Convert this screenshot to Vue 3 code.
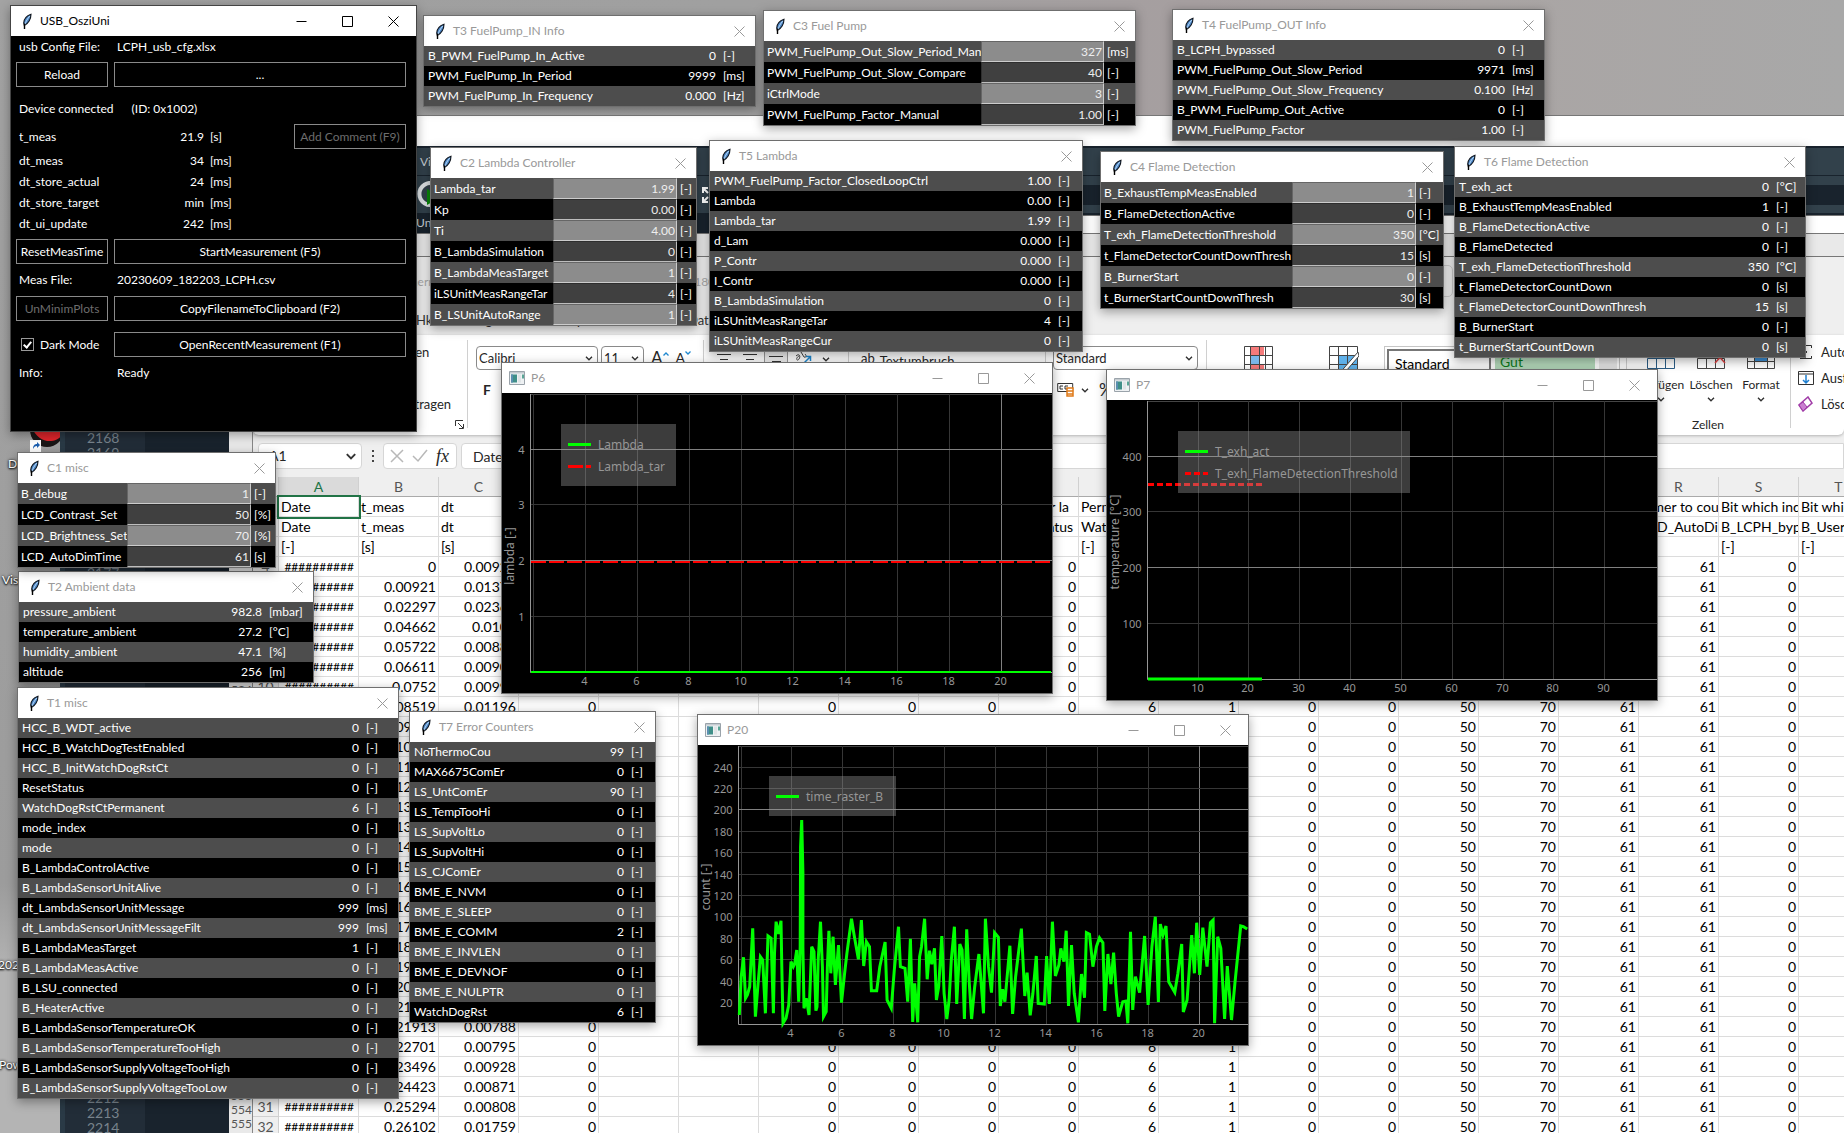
<script setup>
const tableWindows = [
  {
    id: 't3', title: 'T3 FuelPump_IN Info', x: 423, y: 15, w: 333, unit: 32,
    rows: [
      ['B_PWM_FuelPump_In_Active', '0', '[-]'],
      ['PWM_FuelPump_In_Period', '9999', '[ms]'],
      ['PWM_FuelPump_In_Frequency', '0.000', '[Hz]'],
    ],
  },
  {
    id: 't4', title: 'T4 FuelPump_OUT Info', x: 1172, y: 9, w: 373, unit: 32,
    rows: [
      ['B_LCPH_bypassed', '0', '[-]'],
      ['PWM_FuelPump_Out_Slow_Period', '9971', '[ms]'],
      ['PWM_FuelPump_Out_Slow_Frequency', '0.100', '[Hz]'],
      ['B_PWM_FuelPump_Out_Active', '0', '[-]'],
      ['PWM_FuelPump_Factor', '1.00', '[-]'],
    ],
  },
  {
    id: 't5', title: 'T5 Lambda', x: 709, y: 140, w: 374, unit: 24,
    rows: [
      ['PWM_FuelPump_Factor_ClosedLoopCtrl', '1.00', '[-]'],
      ['Lambda', '0.00', '[-]'],
      ['Lambda_tar', '1.99', '[-]'],
      ['d_Lam', '0.000', '[-]'],
      ['P_Contr', '0.000', '[-]'],
      ['I_Contr', '0.000', '[-]'],
      ['B_LambdaSimulation', '0', '[-]'],
      ['iLSUnitMeasRangeTar', '4', '[-]'],
      ['iLSUnitMeasRangeCur', '0', '[-]'],
    ],
  },
  {
    id: 't6', title: 'T6 Flame Detection', x: 1454, y: 146, w: 352, unit: 29,
    rows: [
      ['T_exh_act', '0', '[°C]'],
      ['B_ExhaustTempMeasEnabled', '1', '[-]'],
      ['B_FlameDetectionActive', '0', '[-]'],
      ['B_FlameDetected', '0', '[-]'],
      ['T_exh_FlameDetectionThreshold', '350', '[°C]'],
      ['t_FlameDetectorCountDown', '0', '[s]'],
      ['t_FlameDetectorCountDownThresh', '15', '[s]'],
      ['B_BurnerStart', '0', '[-]'],
      ['t_BurnerStartCountDown', '0', '[s]'],
    ],
  },
  {
    id: 't2', title: 'T2 Ambient data', x: 18, y: 571, w: 296, unit: 44,
    rows: [
      ['pressure_ambient', '982.8', '[mbar]'],
      ['temperature_ambient', '27.2', '[°C]'],
      ['humidity_ambient', '47.1', '[%]'],
      ['altitude', '256', '[m]'],
    ],
  },
  {
    id: 't1', title: 'T1 misc', x: 17, y: 687, w: 382, unit: 32,
    rows: [
      ['HCC_B_WDT_active', '0', '[-]'],
      ['HCC_B_WatchDogTestEnabled', '0', '[-]'],
      ['HCC_B_InitWatchDogRstCt', '0', '[-]'],
      ['ResetStatus', '0', '[-]'],
      ['WatchDogRstCtPermanent', '6', '[-]'],
      ['mode_index', '0', '[-]'],
      ['mode', '0', '[-]'],
      ['B_LambdaControlActive', '0', '[-]'],
      ['B_LambdaSensorUnitAlive', '0', '[-]'],
      ['dt_LambdaSensorUnitMessage', '999', '[ms]'],
      ['dt_LambdaSensorUnitMessageFilt', '999', '[ms]'],
      ['B_LambdaMeasTarget', '1', '[-]'],
      ['B_LambdaMeasActive', '0', '[-]'],
      ['B_LSU_connected', '0', '[-]'],
      ['B_HeaterActive', '0', '[-]'],
      ['B_LambdaSensorTemperatureOK', '0', '[-]'],
      ['B_LambdaSensorTemperatureTooHigh', '0', '[-]'],
      ['B_LambdaSensorSupplyVoltageTooHigh', '0', '[-]'],
      ['B_LambdaSensorSupplyVoltageTooLow', '0', '[-]'],
    ],
  },
  {
    id: 't7', title: 'T7 Error Counters', x: 409, y: 711, w: 247, unit: 24,
    rows: [
      ['NoThermoCou', '99', '[-]'],
      ['MAX6675ComEr', '0', '[-]'],
      ['LS_UntComEr', '90', '[-]'],
      ['LS_TempTooHi', '0', '[-]'],
      ['LS_SupVoltLo', '0', '[-]'],
      ['LS_SupVoltHi', '0', '[-]'],
      ['LS_CJComEr', '0', '[-]'],
      ['BME_E_NVM', '0', '[-]'],
      ['BME_E_SLEEP', '0', '[-]'],
      ['BME_E_COMM', '2', '[-]'],
      ['BME_E_INVLEN', '0', '[-]'],
      ['BME_E_DEVNOF', '0', '[-]'],
      ['BME_E_NULPTR', '0', '[-]'],
      ['WatchDogRst', '6', '[-]'],
    ],
  },
]

const controlWindows = [
  {
    id: 'c3', title: 'C3 Fuel Pump', x: 763, y: 10, w: 373, field: 123, unit: 31,
    rows: [
      ['PWM_FuelPump_Out_Slow_Period_Man', '327', '[ms]'],
      ['PWM_FuelPump_Out_Slow_Compare', '40', '[-]'],
      ['iCtrlMode', '3', '[-]'],
      ['PWM_FuelPump_Factor_Manual', '1.00', '[-]'],
    ],
  },
  {
    id: 'c2', title: 'C2 Lambda Controller', x: 430, y: 147, w: 267, field: 124, unit: 19,
    rows: [
      ['Lambda_tar', '1.99', '[-]'],
      ['Kp', '0.00', '[-]'],
      ['Ti', '4.00', '[-]'],
      ['B_LambdaSimulation', '0', '[-]'],
      ['B_LambdaMeasTarget', '1', '[-]'],
      ['iLSUnitMeasRangeTar', '4', '[-]'],
      ['B_LSUnitAutoRange', '1', '[-]'],
    ],
  },
  {
    id: 'c4', title: 'C4 Flame Detection', x: 1100, y: 151, w: 344, field: 124, unit: 27,
    rows: [
      ['B_ExhaustTempMeasEnabled', '1', '[-]'],
      ['B_FlameDetectionActive', '0', '[-]'],
      ['T_exh_FlameDetectionThreshold', '350', '[°C]'],
      ['t_FlameDetectorCountDownThresh', '15', '[s]'],
      ['B_BurnerStart', '0', '[-]'],
      ['t_BurnerStartCountDownThresh', '30', '[s]'],
    ],
  },
  {
    id: 'c1', title: 'C1 misc', x: 17, y: 452, w: 259, field: 124, unit: 24,
    rows: [
      ['B_debug', '1', '[-]'],
      ['LCD_Contrast_Set', '50', '[%]'],
      ['LCD_Brightness_Set', '70', '[%]'],
      ['LCD_AutoDimTime', '61', '[s]'],
    ],
  },
]

const raster = [
  155, 945, 160, 830, 166, 772, 171, 895, 176, 885, 182, 860, 190, 685, 193, 800, 197, 950, 204, 850,
  210, 770, 216, 780, 223, 940, 230, 708, 238, 715, 244, 940, 247, 760, 251, 665, 257, 702, 264, 662,
  266, 800, 269, 970, 277, 955, 284, 915, 290, 785, 296, 800, 300, 790, 305, 750, 310, 905, 314, 740,
  315, 440, 318, 360, 321, 515, 321, 740, 324, 925, 330, 895, 337, 945, 344, 740, 350, 755, 355, 932,
  358, 920, 361, 780, 367, 665, 372, 800, 375, 950, 382, 935, 385, 800, 389, 692, 394, 820, 400, 710,
  406, 855, 414, 735, 422, 908, 430, 820, 436, 760, 448, 656, 455, 705, 466, 778, 474, 660, 480, 798,
  487, 725, 495, 740, 500, 872, 514, 872, 522, 800, 536, 726, 541, 900, 552, 925, 560, 810, 571, 680,
  576, 800, 588, 805, 595, 905, 602, 716, 608, 966, 613, 850, 621, 967, 626, 770, 631, 740, 639, 656,
  646, 838, 652, 752, 658, 793, 665, 745, 670, 900, 676, 860, 684, 708, 690, 880, 697, 957, 703, 900,
  709, 780, 717, 680, 723, 912, 731, 732, 737, 750, 743, 957, 749, 688, 756, 850, 762, 957, 770, 860,
  781, 762, 793, 940, 798, 656, 806, 800, 814, 878, 822, 698, 832, 712, 837, 918, 843, 868, 849, 905,
  862, 737, 869, 942, 877, 830, 892, 686, 901, 888, 907, 818, 915, 946, 922, 880, 931, 768, 936, 910,
  952, 912, 958, 768, 965, 912, 973, 665, 981, 828, 990, 795, 995, 745, 1003, 785, 1009, 692, 1015, 918,
  1023, 735, 1030, 880, 1041, 967, 1049, 822, 1057, 893, 1062, 698, 1070, 703, 1079, 800, 1088, 740,
  1096, 713, 1105, 728, 1110, 933, 1118, 762, 1126, 852, 1133, 758, 1140, 880, 1146, 950, 1157, 905,
  1165, 903, 1170, 970, 1177, 695, 1183, 930, 1190, 830, 1201, 878, 1214, 708, 1223, 915, 1233, 740,
  1242, 650, 1250, 906, 1255, 672, 1262, 705, 1270, 678, 1277, 845, 1293, 877, 1301, 820, 1311, 732,
  1315, 936, 1325, 900, 1337, 705, 1344, 820, 1350, 668, 1358, 825, 1366, 683, 1377, 800, 1386, 668,
  1393, 660, 1397, 970, 1405, 710, 1413, 745, 1423, 957, 1430, 798, 1441, 960, 1450, 850, 1465, 678,
  1472, 680, 1482, 687,
]
const rasterPoints = []
for (let i = 0; i < raster.length; i += 2) {
  rasterPoints.push(`${((raster[i] - 47) / 2.613).toFixed(1)},${((raster[i + 1] - 135) / 3).toFixed(1)}`)
}

const ticks = (labels, start, step) => labels.map((label, i) => ({ label, at: Math.floor(start + i * step) + 0.5 }))

const plots = [
  {
    id: 'p6', title: 'P6', x: 501, y: 362, axis: 28.5, label: 'lambda [-]', labelY: 163,
    xs: ticks(['', 4, 6, 8, 10, 12, 14, 16, 18, 20], 31, 52), brightX: [20],
    ys: ticks([4, 3, 2, 1], 56, 55.7), brightY: [4, 2],
    legend: { x: 59, w: 115, items: [['Lambda', '#0f0', ''], ['Lambda_tar', '#f00', '15 3']] },
    lines: [
      { points: '29,169 549,169', color: '#f00', dash: '15 3' },
      { points: '29,279 549,279', color: '#0f0', dash: '' },
    ],
  },
  {
    id: 'p7', title: 'P7', x: 1106, y: 369, axis: 40.5, label: 'temperature [°C]', labelY: 142,
    xs: ticks([10, 20, 30, 40, 50, 60, 70, 80, 90], 91, 50.85), brightX: [],
    ys: ticks([400, 300, 200, 100], 56, 55.7), brightY: [400, 200],
    legend: { x: 71, w: 232, items: [['T_exh_act', '#0f0', ''], ['T_exh_FlameDetectionThreshold', '#f00', '6 3']] },
    lines: [
      { points: '41,84.5 155,84.5', color: '#f00', dash: '6 3' },
      { points: '41,279 155,279', color: '#0f0', dash: '' },
    ],
  },
  {
    id: 'p20', title: 'P20', x: 697, y: 714, axis: 40.5, label: 'count [-]', labelY: 142,
    xs: ticks(['', 4, 6, 8, 10, 12, 14, 16, 18, 20], 43, 50.9), brightX: [20],
    ys: ticks([240, 220, 200, 180, 160, 140, 120, 100, 80, 60, 40, 20], 22, 21.4), brightY: [200],
    legend: { x: 71, w: 127, items: [['time_raster_B', '#0f0', '']] },
    lines: [{ points: rasterPoints.join(' '), color: '#0f0', dash: '' }],
  },
]

const timing = [
  ['dt_meas', '34', '[ms]'],
  ['dt_store_actual', '24', '[ms]'],
  ['dt_store_target', 'min', '[ms]'],
  ['dt_ui_update', '242', '[ms]'],
]

const columns = 'ABCDEFGHIJKLMNOPQRST'.split('')
const blank = (n) => Array(n).fill('')
const textRows = [
  ['Date', 't_meas', 'dt', ...blank(6), 'Indicator la', 'Permanent', ...blank(6), 'Timer to count', 'Bit which indicates', 'Bit which indicates'],
  ['Date', 't_meas', 'dt', ...blank(6), 'ResetStatus', 'WatchDogRst', ...blank(6), 'LCD_AutoDimTime', 'B_LCPH_bypassed', 'B_UserInput'],
  ['[-]', '[s]', '[s]', ...blank(7), '[-]', ...blank(7), '[-]', '[-]'],
]
const times = [
  ['0', '0.00921'], ['0.00921', '0.01376'], ['0.02297', '0.02365'], ['0.04662', '0.0106'],
  ['0.05722', '0.00889'], ['0.06611', '0.00909'], ['0.0752', '0.00999'], ['0.08519', '0.01196'],
  ['0.09715', '0.00821'], ['0.10536', '0.00794'], ['0.11330', '0.00812'], ['0.12142', '0.00876'],
  ['0.13018', '0.00801'], ['0.13819', '0.00799'], ['0.14618', '0.00802'], ['0.15420', '0.00773'],
  ['0.16193', '0.00788'], ['0.16981', '0.00791'], ['0.17772', '0.00803'], ['0.18575', '0.00788'],
  ['0.19363', '0.00862'], ['0.20225', '0.00811'], ['0.21036', '0.00877'], ['0.21913', '0.00788'],
  ['0.22701', '0.00795'], ['0.23496', '0.00928'], ['0.24423', '0.00871'], ['0.25294', '0.00808'],
  ['0.26102', '0.01759'],
]
const numberRows = times.map(([t, dt]) => [
  '##########', t, dt, '0', '', '', '0', '0', '0', '0', '6', '1', '0', '0', '50', '70', '61', '61', '0', '',
])

const codeLines = Array.from({ length: 48 }, (_, i) => 2168 + i)
const listLines = Array.from({ length: 46 }, (_, i) => 510 + i)
</script>

<template>
  <div class="desktop">
    <svg class="defs" aria-hidden="true">
      <symbol id="feather" viewBox="0 0 12 17">
        <path d="M10 1.200C6 2.500 3 5.500 2.700 10L3.300 12.500C7.200 11 10 6 10 1.200Z" fill="#4a86c8" stroke="#10151c" stroke-width="1.100" />
        <path d="M8.800 3C6.500 5.500 5 8.500 3.800 11.500" fill="none" stroke="#b9d7f2" />
        <path d="M3.500 10.500V16" fill="none" stroke="#000" stroke-width="1.400" />
      </symbol>
      <symbol id="close" viewBox="0 0 11 11"><path d="M.5.5l10 10M10.500.5l-10 10" fill="none" stroke="currentColor" /></symbol>
      <symbol id="max" viewBox="0 0 11 11"><path d="M.5.5h10v10h-10z" fill="none" stroke="currentColor" /></symbol>
      <symbol id="min" viewBox="0 0 11 11"><path d="M.5 5.500h10" fill="none" stroke="currentColor" /></symbol>
      <symbol id="program" viewBox="0 0 16 14">
        <path d="M.5.5h15v13H.5z" fill="#eef1f3" stroke="#9aa3aa" />
        <path d="M1 1h14v1.500H1z" fill="#c4cbd0" />
        <path d="M2 3.500h6v8H2z" fill="#3f8f88" /><path d="M2 3.500h2v8H2z" fill="#5b8fb0" />
        <path d="M9 3.500h3v8H9z" fill="#dfe4e6" /><path d="M13 3.500h2v4h-2z" fill="#5aa596" />
      </symbol>
      <symbol id="chev" viewBox="0 0 8 5"><path d="M1 .8l3 3 3-3" fill="none" stroke="#333" stroke-width="1.400" /></symbol>
    </svg>

    <ul class="shortcuts">
      <li class="s1">
        <svg width="34" height="34" viewBox="0 0 34 34">
          <circle cx="17" cy="10" r="17" fill="#1a1616" />
          <path d="M2 8C8 22 24 26 33 14L30 6C24 16 10 12 4 2Z" fill="#e0262c" />
          <path d="M12 4c4-3 10-1 11 3-4-2-8 0-11-3z" fill="#e0262c" />
          <path d="M0 20h11v12H0z" fill="#fff" /><path d="M3 29c0-4 2-5 4-5v-2l3 3-3 3v-2c-2 0-3 1-4 3z" fill="#1c5fb0" />
        </svg>
        <span>Dragon</span>
      </li>
      <li class="s2"><span>Visual</span></li>
      <li class="s3"><span>202306</span></li>
      <li class="s4"><span>Power</span></li>
    </ul>

    <!-- code editor behind everything -->
    <section class="ide">
      <div class="ide-title"></div>
      <div class="ide-menu"><span>View</span></div>
      <div class="ide-tools">
        <svg width="28" height="28" viewBox="0 0 28 28">
          <path d="M20 3a11 11 0 1 0 0 20" fill="none" stroke="#dfe3e6" stroke-width="4" /><path d="M12 8l14 8-14 8z" fill="#0a8a0a" />
        </svg>
        <svg class="expand" width="18" height="18" viewBox="0 0 18 18">
          <path d="M2 7V2h5M2 2l5 5M16 7V2h-5M16 2l-5 5M2 11v5h5M2 16l5-5M16 11v5h-5" fill="none" stroke="#fff" stroke-width="2" />
        </svg>
        <div class="ide-path"></div>
      </div>
      <div class="ide-tab"><span>Uni</span></div>
      <ol class="code"><li v-for="n in codeLines" :key="n">{{ n }}</li></ol>
    </section>
    <section class="backdrop-window upper"></section>
    <section class="backdrop-window lower">
      <ol class="list"><li v-for="n in listLines" :key="n">{{ n }}</li></ol>
    </section>

    <!-- spreadsheet -->
    <section class="excel">
      <header class="x-title">
        <span>Automatisches Speichern</span>
        <span>20230609_180322_LCPH.csv</span>
        <i class="search"></i>
      </header>
      <nav class="x-tabs">
        <a href="#">Hk</a><a href="#">Einfügen</a><a href="#">Seitenlayout</a><a href="#">Daten</a>
      </nav>
      <div class="ribbon">
        <div class="group clip">
          <span>Kopieren</span>
          <span>Format übertragen</span>
          <svg width="9" height="9" viewBox="0 0 9 9"><path d="M.5 6V.5H8M3 3l5 5M8.500 4v4.500H4" fill="none" stroke="#333" /></svg>
        </div>
        <div class="group font">
          <div class="line">
            <label class="pick wide"><select aria-label="Schriftart"><option>Calibri</option></select><svg width="8" height="5"><use href="#chev" /></svg></label>
            <label class="pick small"><select aria-label="Schriftgrad"><option>11</option></select><svg width="8" height="5"><use href="#chev" /></svg></label>
            <span class="grow">A<svg width="6" height="4" viewBox="0 0 6 4"><path d="M.5 3.500L3 1l2.500 2.500" fill="none" stroke="#1e88d0" stroke-width="1.300" /></svg></span>
            <span class="shrink">A<svg width="6" height="4" viewBox="0 0 6 4"><path d="M.5.5L3 3 5.500.5" fill="none" stroke="#1e88d0" stroke-width="1.300" /></svg></span>
          </div>
          <b>F</b>
        </div>
        <div class="group align">
          <svg width="16" height="16" viewBox="0 0 16 16"><path d="M1 3.500h14M4 8.500h8M1 13.500h14" stroke="#333" /></svg>
          <svg width="16" height="16" viewBox="0 0 16 16"><path d="M1 3.500h14M4 8.500h8M1 13.500h14" stroke="#333" /></svg>
          <span class="pressed"><svg width="16" height="16" viewBox="0 0 16 16"><path d="M1 4.500h14M4 9.500h9" stroke="#333" /></svg></span>
          <span class="slant"><svg width="18" height="16" viewBox="0 0 18 16"><path d="M2 5c3-3 5 0 3 3s-4-1 0-3M7 1l3 5c2 1 3-1 1-3" fill="none" stroke="#444" /><path d="M7 15l9-9M12 5.500h4.500V10" fill="none" stroke="#1e88d0" stroke-width="1.500" /></svg></span>
          <svg width="8" height="5"><use href="#chev" /></svg>
          <span class="wrap"><em>ab</em>Textumbruch</span>
        </div>
        <div class="group number">
          <label class="pick"><select aria-label="Zahlenformat"><option>Standard</option></select><svg width="8" height="5"><use href="#chev" /></svg></label>
          <div class="line">
            <svg width="18" height="16" viewBox="0 0 18 16"><path d="M.7 1.500h15v8h-15z" fill="#fff" stroke="#333" /><path d="M6 4H3v3h3M11 4H8v3h3" fill="none" stroke="#333" /><path d="M10 6h6v8h-6zM10 9h6M10 12h6" fill="#fff" stroke="#e07b1a" stroke-width="1.500" /></svg>
            <svg width="8" height="5"><use href="#chev" /></svg>
            <span class="pct">%</span>
          </div>
        </div>
        <div class="group styles">
          <svg width="30" height="30" viewBox="0 0 30 30"><path d="M1 1h28v28H1z" fill="#fff" /><path d="M6 1h14v9H6zM6 18h14v9H6z" fill="#f57b7b" /><path d="M6 10h9v8H6z" fill="#7ab8ea" /><path d="M.5.5h28v28h-28zM.5 9.500h28M.5 18.500h28M6.500 0v29M15.500 0v29M21.500 0v29" fill="none" stroke="#444" /></svg>
          <svg width="30" height="30" viewBox="0 0 30 30"><path d="M9 9h20v20H9z" fill="#5fb1ea" /><path d="M.5.5h28v28h-28zM.5 9.500h28M.5 18.500h28M9.500 0v29M18.500 0v29" fill="none" stroke="#444" /><path d="M29 6L15 22l-4 5 6-2L30 10z" fill="#fff" stroke="#444" /></svg>
          <div class="gallery"><span class="std">Standard</span><span class="good">Gut</span><i></i></div>
        </div>
        <div class="group cells">
          <div class="cell-tools">
            <button type="button"><svg width="30" height="20" viewBox="0 0 30 20"><path d="M4 1h25v9H4z" fill="#5fb1ea" /><path d="M1.500 9.500h27v10h-27zM10.500 9v10M19.500 9v10M10 3.500H1l5-4M1 3.500l5 4" fill="none" stroke="#2a5d86" /></svg>Einfügen<svg width="8" height="5"><use href="#chev" /></svg></button>
            <button type="button"><svg width="30" height="20" viewBox="0 0 30 20"><path d="M5 1h14v9H5z" fill="#5fb1ea" /><path d="M1.500 9.500h27v10h-27zM10.500 9v10M19.500 9v10" fill="none" stroke="#444" /><path d="M19 3l10 11M29 3L19 14" stroke="#e04040" stroke-width="1.500" /></svg>Löschen<svg width="8" height="5"><use href="#chev" /></svg></button>
            <button type="button"><svg width="30" height="20" viewBox="0 0 30 20"><path d="M8 0h13v12H8z" fill="#3d8fd6" /><path d="M1.500 1.500h27v18h-27zM1 12.500h27M8.500 1v18M21.500 1v18" fill="none" stroke="#444" /></svg>Format<svg width="8" height="5"><use href="#chev" /></svg></button>
          </div>
          <span class="caption">Zellen</span>
        </div>
        <div class="group edit">
          <span><svg width="16" height="16" viewBox="0 0 16 16"><path d="M13.500 4V1.500H2l7 6.500-7 6.500h11.500V12" fill="none" stroke="#333" /></svg>AutoSumme</span>
          <span><svg width="16" height="16" viewBox="0 0 16 16"><path d="M.5 1.500h15v13H.500zM.5 4h15" fill="none" stroke="#333" /><path d="M8 5v8M5 10l3 3 3-3" fill="none" stroke="#1e7fd0" stroke-width="1.500" /></svg>Ausfüllen</span>
          <span><svg width="16" height="16" viewBox="0 0 16 16"><path d="M1 9l4 6 9-8-4-6z" fill="#fff" stroke="#a13da8" stroke-width="1.500" /><path d="M1 9l4 6 4-4-4-5z" fill="#c97fd0" stroke="#a13da8" /></svg>Löschen</span>
        </div>
      </div>
      <div class="formula">
        <label class="pick name"><select aria-label="Namenfeld"><option>A1</option></select><svg width="12" height="7"><use href="#chev" /></svg></label>
        <span class="dots"><i></i><i></i><i></i></span>
        <span class="fx">
          <svg width="14" height="14" viewBox="0 0 14 14"><path d="M1 1l12 12M13 1L1 13" stroke="#b8b8b8" stroke-width="1.500" /></svg>
          <svg width="16" height="14" viewBox="0 0 16 14"><path d="M1 7l5 5L15 1" fill="none" stroke="#b8b8b8" stroke-width="1.500" /></svg>
          <em>fx</em>
        </span>
        <input aria-label="Formel" value="Date" />
      </div>
      <table class="sheet">
        <colgroup><col class="num" /><col v-for="c in columns" :key="c" class="col" /></colgroup>
        <thead><tr><th></th><th v-for="(c, i) in columns" :key="c" :class="{ on: i === 0 }">{{ c }}</th></tr></thead>
        <tbody>
          <tr v-for="(row, r) in textRows" :key="'t' + r">
            <th :class="{ on: r === 0 }">{{ r + 1 }}</th>
            <td v-for="(cell, c) in row" :key="c" :class="{ picked: r === 0 && c === 0 }">{{ cell }}</td>
          </tr>
          <tr v-for="(row, r) in numberRows" :key="'n' + r" class="numbers">
            <th>{{ r + 4 }}</th>
            <td v-for="(cell, c) in row" :key="c" :class="{ hash: c === 0 }">{{ cell }}</td>
          </tr>
        </tbody>
      </table>
    </section>

    <!-- measurement tables -->
    <section v-for="w in tableWindows" :key="w.id" class="window" :style="{ left: w.x + 'px', top: w.y + 'px', width: w.w + 'px' }">
      <header class="bar">
        <svg class="feather"><use href="#feather" /></svg><h2>{{ w.title }}</h2>
        <button type="button" class="tool" aria-label="Close"><svg width="11" height="11"><use href="#close" /></svg></button>
      </header>
      <table class="readings">
        <colgroup><col /><col class="value" /><col :style="{ width: w.unit + 7 + 'px' }" /></colgroup>
        <tbody>
          <tr v-for="row in w.rows" :key="row[0]"><th scope="row">{{ row[0] }}</th><td class="value">{{ row[1] }}</td><td class="unit">{{ row[2] }}</td></tr>
        </tbody>
      </table>
    </section>

    <!-- editable parameters -->
    <section v-for="w in controlWindows" :key="w.id" class="window" :style="{ left: w.x + 'px', top: w.y + 'px', width: w.w + 'px' }">
      <header class="bar">
        <svg class="feather"><use href="#feather" /></svg><h2>{{ w.title }}</h2>
        <button type="button" class="tool" aria-label="Close"><svg width="11" height="11"><use href="#close" /></svg></button>
      </header>
      <div v-for="row in w.rows" :key="row[0]" class="param">
        <label :for="w.id + row[0]">{{ row[0] }}</label>
        <input :id="w.id + row[0]" :value="row[1]" :style="{ width: w.field + 'px' }" />
        <span :style="{ width: w.unit + 'px' }">{{ row[2] }}</span>
      </div>
    </section>

    <!-- plots -->
    <section v-for="p in plots" :key="p.id" class="window plot" :style="{ left: p.x + 'px', top: p.y + 'px' }">
      <header class="bar">
        <svg class="program" width="16" height="14"><use href="#program" /></svg><h2>{{ p.title }}</h2>
        <button type="button" class="tool big" aria-label="Minimize"><svg width="11" height="11"><use href="#min" /></svg></button>
        <button type="button" class="tool big" aria-label="Maximize"><svg width="11" height="11"><use href="#max" /></svg></button>
        <button type="button" class="tool big" aria-label="Close"><svg width="11" height="11"><use href="#close" /></svg></button>
      </header>
      <svg class="chart" viewBox="0 0 550 300">
        <path :d="`M${p.axis} 1.500H550`" stroke="#444" />
        <path v-for="t in p.xs" :key="'x' + t.at" :d="`M${t.at} 1V280`" :stroke="p.brightX.includes(t.label) ? '#808080' : '#363636'" />
        <path v-for="t in p.ys" :key="'y' + t.at" :d="`M${p.axis} ${t.at}H550`" :stroke="p.brightY.includes(t.label) ? '#808080' : '#363636'" />
        <path :d="`M${p.axis} 1V279.500H550`" fill="none" stroke="#969696" />
        <polyline v-for="(l, i) in p.lines" :key="i" :points="l.points" :stroke="l.color" :stroke-dasharray="l.dash" fill="none" :stroke-width="p.id === 'p6' ? 2 : 3" />
        <rect :x="p.legend.x" y="31" :width="p.legend.w" :height="18 + 22 * p.legend.items.length" fill="#969696" fill-opacity=".4" />
        <g v-for="(item, i) in p.legend.items" :key="item[0]">
          <path :d="`M${p.legend.x + 7} ${51.5 + i * 22}h23`" :stroke="item[1]" :stroke-dasharray="item[2]" stroke-width="3" />
          <text class="legend" :x="p.legend.x + 37" :y="56 + i * 22">{{ item[0] }}</text>
        </g>
        <text v-for="t in p.xs" :key="'lx' + t.at" :x="t.at - 1" y="292" text-anchor="middle">{{ t.label }}</text>
        <text v-for="t in p.ys" :key="'ly' + t.at" :x="p.axis - 6" :y="t.at + 4" text-anchor="end">{{ t.label }}</text>
        <text class="legend" :transform="`translate(12 ${p.labelY}) rotate(-90)`" text-anchor="middle">{{ p.label }}</text>
      </svg>
    </section>

    <!-- main control panel -->
    <main class="window panel">
      <header class="bar">
        <svg class="feather"><use href="#feather" /></svg><h1>USB_OsziUni</h1>
        <button type="button" class="tool big" aria-label="Minimize"><svg width="11" height="11"><use href="#min" /></svg></button>
        <button type="button" class="tool big" aria-label="Maximize"><svg width="11" height="11"><use href="#max" /></svg></button>
        <button type="button" class="tool big" aria-label="Close"><svg width="11" height="11"><use href="#close" /></svg></button>
      </header>
      <div class="panel-body">
        <div class="two head"><span>usb Config File:</span><span>LCPH_usb_cfg.xlsx</span></div>
        <div class="two"><button type="button">Reload</button><button type="button">...</button></div>
        <div class="device"><span>Device connected</span><span>(ID: 0x1002)</span></div>
        <div class="metric tall"><span>t_meas</span><span>21.9</span><span>[s]</span><button type="button" disabled>Add Comment (F9)</button></div>
        <div class="metrics">
          <div v-for="m in timing" :key="m[0]" class="metric"><span>{{ m[0] }}</span><span>{{ m[1] }}</span><span>{{ m[2] }}</span></div>
        </div>
        <div class="two"><button type="button">ResetMeasTime</button><button type="button">StartMeasurement (F5)</button></div>
        <div class="two file"><span>Meas File:</span><span>20230609_182203_LCPH.csv</span></div>
        <div class="two spaced"><button type="button" disabled>UnMinimPlots</button><button type="button">CopyFilenameToClipboard (F2)</button></div>
        <div class="two"><label class="dark"><input type="checkbox" checked />Dark Mode</label><button type="button">OpenRecentMeasurement (F1)</button></div>
        <div class="two file"><span>Info:</span><span>Ready</span></div>
      </div>
    </main>
  </div>
</template>

<style>
html, body { margin: 0; background: #a3a1a1; }
</style>

<style scoped>
* { box-sizing: border-box; }
.desktop {
  position: relative; height: 100vh; overflow: hidden;
  font: 12px/20px Lato, sans-serif; color: #fff;
  background:
    linear-gradient(180deg, #a3a3a3 0, #9c9c9c 78%, #b4b4b4 86%) 0 0 / 60px 100% no-repeat,
    linear-gradient(90deg, #9f9f9f 0, #a0a0a0 40%, #a69fa0 65%, #aaa5a4 80%, #a8a8a8 100%);
}
button, input, select { font: inherit; color: inherit; }
h1, h2 { margin: 0; font-size: 12px; font-weight: 400; }
ul, ol { list-style: none; margin: 0; padding: 0; }
i, em { font-style: normal; }
.defs { position: absolute; width: 0; height: 0; }

/* desktop shortcuts */
.shortcuts li { position: absolute; text-shadow: 0 1px 2px #000, 0 0 3px #000; }
.shortcuts svg { position: absolute; left: 22px; top: -34px; }
.s1 { left: 8px; top: 454px; }
.s2 { left: 2px; top: 570px; }
.s3 { left: -2px; top: 955px; }
.s4 { left: -1px; top: 1055px; }

/* code editor */
.ide { position: absolute; left: 60px; right: 0; top: 115px; bottom: 0; overflow: hidden; background: #19232d; border-left: 5px solid #2a3a46; }
.ide-title { height: 31px; background: #fff; border-top: 1px solid #777; }
.ide-menu { height: 30px; background: #32414b; border-top: 2px solid #19232d; border-bottom: 1px solid #19232d; padding: 4px 0 0 355px; color: #c8d0d6; }
.ide-tools { height: 37px; background: #32414b; display: flex; align-items: center; padding-left: 350px; }
.expand { margin-left: 258px; }
.ide-path { flex: 1; height: 20px; margin-left: 330px; background: #19232d; }
.ide-tab { height: 20px; padding-left: 351px; color: #c8d0d6; }
.code { margin-top: 197px; width: 80px; background: #222d38; color: #78838c; font-size: 14px; line-height: 15px; padding-left: 22px; }
.backdrop-window { position: absolute; border-top: 1px solid #777; right: 0; }
.upper { left: 800px; top: 215px; height: 20px; background: #fff; }
.lower { left: 229px; top: 233px; bottom: 0; background: #e9e9e9; }
.list { margin-top: 253px; padding-left: 2px; color: #555; line-height: 14px; }

/* spreadsheet */
.excel { position: absolute; left: 252px; right: 0; top: 256px; bottom: 0; overflow: hidden; background: #efefef; color: #262626; border-top: 1px solid #777; border-left: 1px solid #888; }
.x-title { display: grid; grid-template-columns: 380px 500px 320px; height: 48px; padding-top: 8px; color: #a8a8a8; line-height: 34px; }
.x-title span:first-child { text-align: right; padding-right: 198px; white-space: nowrap; }
.search { height: 32px; border: 1px solid #ccc; border-radius: 5px; }
.x-tabs { display: grid; grid-template-columns: 40px 75px 157px auto; padding-left: 163px; height: 30px; line-height: 30px; font-size: 13px; }
.x-tabs a { color: #333; text-decoration: none; }
.ribbon { display: grid; grid-template-columns: 214px 236px 342px 161px 420px 164px 1fr; height: 100px; background: #fff; border-radius: 0 0 6px 6px; box-shadow: 0 1px 3px rgba(0, 0, 0, .25); color: #262626; overflow: hidden; font-size: 13px; }
.group { position: relative; padding-top: 11px; white-space: nowrap; }
.group + .group::before { content: ""; position: absolute; left: 0; top: 5px; bottom: 7px; border-left: 1px solid #d0d0d0; }
.clip { display: flex; flex-direction: column; align-items: flex-start; gap: 32px; padding: 7px 16px 0 125px; }
.clip span + span { align-self: flex-end; }
.clip svg { position: absolute; right: 3px; bottom: 6px; }
.line { display: flex; align-items: center; gap: 3px; }
.font { padding-left: 9px; }
.font b { display: block; margin: 10px 0 0 7px; font-size: 14px; }
.pick { position: relative; display: block; }
.pick select { appearance: none; width: 100%; height: 24px; padding: 0 2px; background: #fff; border: 1px solid #8a8a8a; border-radius: 4px; }
.pick svg { position: absolute; right: 5px; top: 10px; }
.wide { width: 122px; }
.small { width: 43px; }
.grow { margin-left: 4px; font-size: 17px; }
.shrink { margin-left: 4px; font-size: 14px; }
.grow svg, .shrink svg { margin-bottom: 8px; }
.align { display: flex; align-items: center; gap: 10px; height: 37px; padding-left: 13px; }
.pressed { border: 1px solid #999; background: #f0f0f0; width: 24px; height: 24px; padding: 4px 3px; line-height: 0; margin: 0 -4px; }
.slant { height: 16px; line-height: 0; }
.wrap { margin-left: 8px; padding-left: 12px; border-left: 1px solid #d0d0d0; }
.wrap em { margin-right: 5px; vertical-align: 3px; }
.number { padding: 11px 8px 0; }
.number .line { gap: 6px; margin: 10px 0 0 4px; }
.pct { margin-left: 4px; font-size: 17px; }
.styles { display: flex; align-items: flex-start; gap: 55px; padding-left: 38px; }
.gallery { display: flex; gap: 4px; width: 236px; height: 60px; border: 1px solid #c6c6c6; padding: 2px; margin-left: -30px; font-size: 14px; line-height: 26px; }
.std { width: 104px; height: 40px; border: 2px solid #777; padding-left: 6px; color: #000; }
.good { width: 100px; height: 40px; background: #b6dcbd; color: #0c7a1b; padding-left: 5px; }
.gallery i { flex: 1; background: #e8e8e8; }
.cells { text-align: center; font-size: 12px; }
.cell-tools { display: flex; padding-left: 10px; }
.cell-tools button { width: 50px; border: 0; background: none; padding: 3px 0 0; display: flex; flex-direction: column; align-items: center; gap: 2px; }
.cell-tools button svg:first-child { margin-bottom: 4px; }
.caption { position: absolute; left: 0; right: 0; bottom: 0; }
.edit { display: flex; flex-direction: column; gap: 6px; padding: 7px 0 0 8px; }
.edit span { display: flex; align-items: center; gap: 7px; }
.formula { display: flex; align-items: center; height: 42px; padding: 0 0 0 5px; font-size: 14px; }
.name { width: 104px; }
.name select { height: 26px; border-color: #d6d6d6; padding-left: 10px; }
.name svg { right: 5px; }
.dots { width: 21px; display: flex; flex-direction: column; align-items: center; gap: 3px; }
.dots i { width: 2px; height: 2px; background: #444; }
.fx { display: flex; align-items: center; gap: 8px; width: 74px; height: 26px; padding-left: 6px; background: #fff; border: 1px solid #d6d6d6; border-radius: 4px; }
.fx em { font: italic 18px/20px "Liberation Serif", serif; }
.formula input { flex: 1; height: 26px; margin-left: 4px; padding: 0 11px; border: 1px solid #d6d6d6; border-radius: 4px 0 0 4px; background: #fff; min-width: 0; }
.sheet { border-collapse: separate; border-spacing: 0; table-layout: fixed; width: 1626px; background: #fff; font: 14px/18px Lato, sans-serif; color: #000; }
.num { width: 26px; }
.col { width: 80px; }
.sheet th { font-weight: 400; color: #555; background: #efefef; padding: 0; height: 20px; border-right: 1px solid #d0d0d0; border-bottom: 1px solid #d0d0d0; }
.sheet thead th { border-bottom-color: #aaa; }
.sheet th.on { background: #dadada; color: #217346; }
.sheet td { height: 20px; padding: 0 2px; white-space: nowrap; overflow: hidden; border-right: 1px solid #dcdcdc; border-bottom: 1px solid #dcdcdc; }
.sheet .numbers td { text-align: right; }
.sheet .numbers td.hash { font-size: 12px; padding-right: 4px; }
.sheet td.picked { outline: 2px solid #217346; }

/* floating windows */
.window { position: absolute; border: 1px solid #6f6f6f; background: #000; box-shadow: 0 3px 10px rgba(0, 0, 0, .35); }
.bar { display: flex; align-items: center; height: 30px; background: #fff; color: #999; }
.bar h1, .bar h2 { flex: 1; }
.feather { width: 12px; height: 17px; margin: 0 7px 0 10px; }
.program { margin: 0 6px 0 7px; }
.tool { display: flex; align-items: center; justify-content: center; width: 31px; height: 30px; padding: 0; border: 0; background: none; }
.big { width: 46px; }

.readings { width: 100%; table-layout: fixed; border-collapse: collapse; }
.readings col.value { width: 60px; }
.readings tr { height: 20px; }
.readings tr:nth-child(odd) { background: #4d4d4d; }
.readings th { font-weight: 400; text-align: left; padding: 0 0 0 4px; white-space: nowrap; }
.readings td { padding: 0; white-space: nowrap; }
.readings td.value { text-align: right; }
.readings td.unit { padding-left: 7px; }

.param { display: flex; height: 21px; line-height: 21px; }
.param:nth-child(even) { background: #4d4d4d; }
.param label { flex: 1; padding-left: 3px; white-space: nowrap; min-width: 0; }
.param input { padding: 0 1px; text-align: right; color: #eee; background: #404040; border: 1px solid #bdbdbd; border-color: #2e2e2e #bdbdbd #bdbdbd #2e2e2e; border-radius: 0; }
.param:nth-child(even) input { background: #8c8c8c; border-color: #666 #ccc #ccc #666; }
.param span { padding-left: 3px; }

.plot { width: 552px; }
.chart { display: block; width: 100%; height: 300px; font-family: "Noto Sans", sans-serif; }
.chart text { font-size: 11px; fill: #969696; }
.chart text.legend { font-size: 12px; }

/* control panel */
.panel { left: 10px; top: 5px; width: 407px; border-color: #444; }
.panel .bar { color: #000; }
.panel-body { padding: 0 10px 42px 5px; }
.two { display: grid; grid-template-columns: 92px 1fr; column-gap: 6px; height: 25px; align-items: stretch; }
.two > span { align-self: center; padding-left: 3px; }
.head { height: 22px; margin-bottom: 4px; }
.file { height: 32px; }
.spaced { margin-bottom: 11px; }
.panel-body button { padding: 0; background: #000; border: 1px solid #8a8a8a; }
.panel-body button:disabled { color: #6d6d6d; }
.device { display: flex; gap: 18px; height: 37px; padding: 6px 3px 0; align-items: center; }
.metric { display: grid; grid-template-columns: 115px 70px 80px 1fr; height: 21px; padding-left: 3px; align-items: center; }
.metric span:nth-child(2) { text-align: right; }
.metric span:nth-child(3) { padding-left: 6px; }
.metric.tall { height: 25px; grid-template-columns: 115px 70px 1fr 112px; align-items: stretch; line-height: 25px; }
.metric.tall button { line-height: 20px; white-space: nowrap; }
.metrics { margin: 1px 0 5px; }
.dark { display: flex; align-items: center; gap: 6px; padding-left: 5px; }
.dark input { appearance: none; width: 13px; height: 13px; margin: 0; border: 1px solid #999; background: #000; position: relative; }
.dark input:checked::after { content: ""; position: absolute; left: 3px; top: 1px; width: 3px; height: 6px; border: solid #fff; border-width: 0 2px 2px 0; transform: rotate(40deg); }
</style>
